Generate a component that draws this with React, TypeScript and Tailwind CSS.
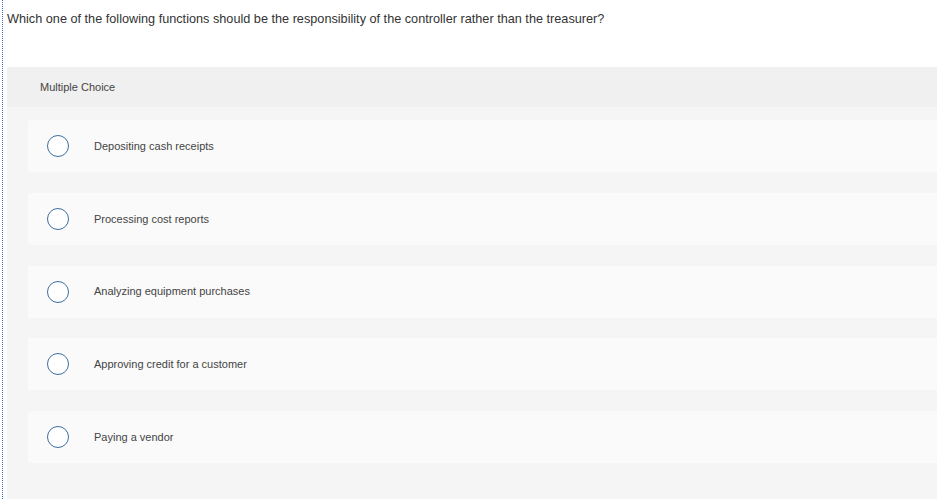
const options = [
  'Depositing cash receipts',
  'Processing cost reports',
  'Analyzing equipment purchases',
  'Approving credit for a customer',
  'Paying a vendor',
];

export default function App() {
  return (
    <div
      className="h-[499px] w-[937px] overflow-hidden bg-white text-[#333]"
      style={{ fontFamily: '"Liberation Sans", Arial, sans-serif' }}
    >
      <div className="ml-[2px] h-full border-l border-dotted border-[#2f6fb6] pl-[4px]">
        <p className="pt-[11px] pb-[40px] text-[12.7px] leading-[16px]">
          Which one of the following functions should be the responsibility of the controller rather than the treasurer?
        </p>

        <div className="h-full bg-[#f5f5f5]">
          <div className="flex h-[40px] items-center bg-[#f0f0f0] pl-[33px] text-[11px] text-[#444]">
            Multiple Choice
          </div>

          <div className="flex flex-col gap-[20.75px] pt-[13px] pl-[21px]">
            {options.map(option => (
              <div key={option} className="flex h-[52px] items-center rounded-l-[3px] bg-[#fafafa]">
                <span className="ml-[19px] h-[22px] w-[22px] rounded-full border-[1.5px] border-[#3d6f9f] bg-white" />
                <span className="ml-[25px] text-[11px] text-[#444]">{option}</span>
              </div>
            ))}
          </div>
        </div>
      </div>
    </div>
  );
}
